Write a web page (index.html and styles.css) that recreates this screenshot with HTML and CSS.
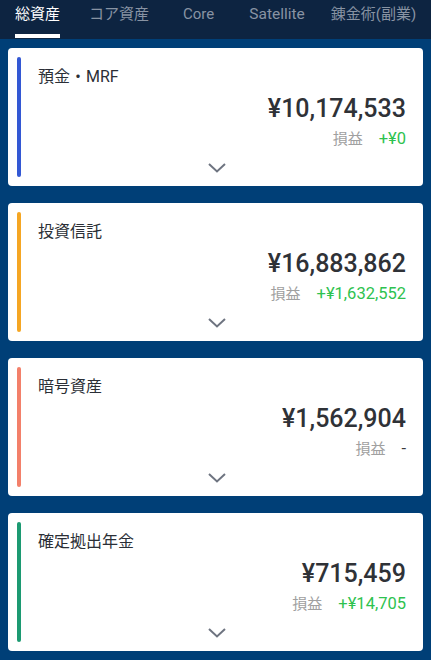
FILE: index.html
```html
<!doctype html>
<html>
  <head>
    <meta charset="UTF-8" />
    <title>資産</title>
    <link rel="stylesheet" href="styles.css">
  </head>
  <body>
    <div id="tabs">
      <span class="tab active">総資産</span>
      <span class="tab">コア資産</span>
      <span class="tab">Core</span>
      <span class="tab">Satellite</span>
      <span class="tab">錬金術(副業)</span>
    </div>
    <div id="list">
      <div class="card">
        <div class="bar bar-blue"></div>
        <div class="body">
          <p class="title">預金・MRF</p>
          <p class="amount">¥10,174,533</p>
          <p class="pl"><span class="pl-label">損益</span><span class="pl-value plus">+¥0</span></p>
          <div class="more"><svg width="18" height="10" viewBox="0 0 18 10"><path d="M1 1 L9 8.5 L17 1" fill="none" stroke="#6e7480" stroke-width="2"/></svg></div>
        </div>
      </div>
      <div class="card">
        <div class="bar bar-orange"></div>
        <div class="body">
          <p class="title">投資信託</p>
          <p class="amount">¥16,883,862</p>
          <p class="pl"><span class="pl-label">損益</span><span class="pl-value plus">+¥1,632,552</span></p>
          <div class="more"><svg width="18" height="10" viewBox="0 0 18 10"><path d="M1 1 L9 8.5 L17 1" fill="none" stroke="#6e7480" stroke-width="2"/></svg></div>
        </div>
      </div>
      <div class="card">
        <div class="bar bar-salmon"></div>
        <div class="body">
          <p class="title">暗号資産</p>
          <p class="amount">¥1,562,904</p>
          <p class="pl"><span class="pl-label">損益</span><span class="pl-value">-</span></p>
          <div class="more"><svg width="18" height="10" viewBox="0 0 18 10"><path d="M1 1 L9 8.5 L17 1" fill="none" stroke="#6e7480" stroke-width="2"/></svg></div>
        </div>
      </div>
      <div class="card">
        <div class="bar bar-green"></div>
        <div class="body">
          <p class="title">確定拠出年金</p>
          <p class="amount">¥715,459</p>
          <p class="pl"><span class="pl-label">損益</span><span class="pl-value plus">+¥14,705</span></p>
          <div class="more"><svg width="18" height="10" viewBox="0 0 18 10"><path d="M1 1 L9 8.5 L17 1" fill="none" stroke="#6e7480" stroke-width="2"/></svg></div>
        </div>
      </div>
    </div>
  </body>
</html>
```

FILE: styles.css
```css
body {
  margin: 0;
  font-family: Roboto, "Noto Sans CJK JP", sans-serif;
  background-color: #003f77;
  width: 431px;
  height: 660px;
  overflow: hidden;
}
p {
  margin: 0;
}
#tabs {
  display: flex;
  height: 39px;
  padding-left: 15px;
  background-color: #0d2441;
  box-sizing: border-box;
  white-space: nowrap;
}
.tab {
  font-size: 15px;
  line-height: 29px;
  color: #8893a3;
  height: 39px;
  margin-right: 31px;
  box-sizing: border-box;
}
.tab:nth-child(2) {
  margin-right: 34px;
}
.tab:nth-child(3) {
  margin-right: 35px;
}
.tab:nth-child(4) {
  font-size: 15.5px;
  margin-right: 26px;
}
.tab.active {
  color: #ffffff;
  margin-right: 29px;
  border-bottom: 4px solid #ffffff;
  height: 38px;
}
#list {
  display: flex;
  flex-direction: column;
  gap: 17px;
  padding: 9px 8px 0 8px;
}
.card {
  display: flex;
  height: 138px;
  background-color: #ffffff;
  border-radius: 4px;
  padding: 9px 17px 9px 9px;
  box-sizing: border-box;
}
.bar {
  width: 4px;
  border-radius: 2px;
  flex-shrink: 0;
}
.bar-blue {
  background-color: #3358d4;
}
.bar-orange {
  background-color: #f5a623;
}
.bar-salmon {
  background-color: #f3806a;
}
.bar-green {
  background-color: #1c9a72;
}
.body {
  flex: 1;
  padding-left: 17px;
  display: flex;
  flex-direction: column;
}
.title {
  font-size: 16px;
  line-height: 22px;
  margin-top: 9px;
  color: #2b2f36;
}
.amount {
  text-align: right;
  font-size: 25px;
  font-weight: 500;
  line-height: 30px;
  margin-top: 6px;
  color: #2f3237;
}
.pl {
  text-align: right;
  font-size: 15px;
  line-height: 20px;
  margin-top: 5px;
}
.pl-label {
  color: #a0a0a0;
  margin-right: 16px;
}
.pl-value {
  font-size: 16.5px;
  color: #3a3a3a;
}
.pl-value.plus {
  color: #2ec24f;
}
.more {
  display: flex;
  justify-content: center;
  margin-top: 14px;
  margin-left: -11px;
}
.more svg {
  display: block;
}
```
